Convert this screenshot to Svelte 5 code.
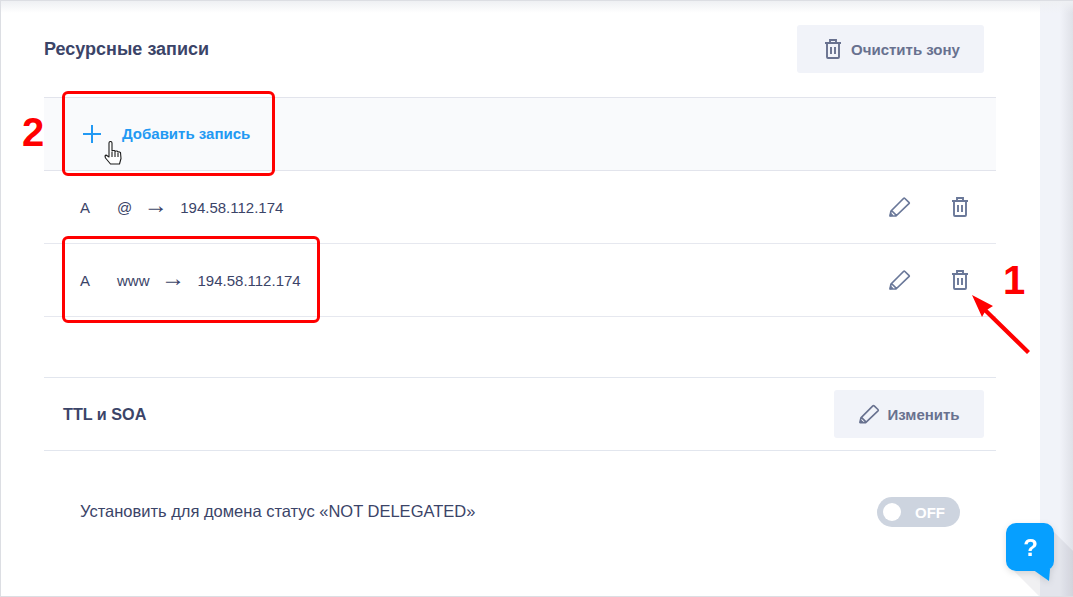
<script>
  const records = [
    { type: 'A', host: '@', ip: '194.58.112.174' },
    { type: 'A', host: 'www', ip: '194.58.112.174' }
  ];
</script>

{#snippet trash(cls)}
  <svg class={cls} viewBox="0 0 16 20" fill="none" stroke="currentColor" stroke-width="1.900">
    <path d="M0 4h16M2 4v14a1 1 0 0 0 1 1h10a1 1 0 0 0 1-1V4M5 4V1h6v3M6 8v7M10 8v7" />
  </svg>
{/snippet}

{#snippet pencil(cls)}
  <svg class={cls} viewBox="0 0 22 20" fill="none" stroke="currentColor" stroke-width="1.700" stroke-linejoin="round">
    <path d="M1 19l1-5L14.500 1.500a1 1 0 0 1 1.400 0l4 3.800a1 1 0 0 1 0 1.400L7 19zM2.500 13.500l5 5" />
    <path d="M1 19l.6-3 2.400 2.400z" fill="currentColor" stroke-width="1" />
  </svg>
{/snippet}

<div class="page">
  <main class="card">
    <header class="head">
      <h2>Ресурсные записи</h2>
      <button class="btn clear">{@render trash('btn-trash')}<span>Очистить зону</span></button>
    </header>

    <div class="add">
      <svg class="plus" viewBox="0 0 20 20" stroke="currentColor" stroke-width="2"><path d="M10 1v18M1 10h18" /></svg>
      <span class="add-label">Добавить запись</span>
    </div>

    {#each records as r}
      <div class="row">
        <span class="type">{r.type}</span>
        <span class="host">{r.host}</span>
        <span class="arrow">→</span>
        <span class="ip">{r.ip}</span>
        <span class="actions">
          {@render pencil('row-pencil')}
          {@render trash('row-trash')}
        </span>
      </div>
    {/each}

    <section class="ttl">
      <h3>TTL и SOA</h3>
      <button class="btn edit">{@render pencil('btn-pencil')}<span>Изменить</span></button>
    </section>

    <div class="status">
      <span class="status-label">Установить для домена статус «NOT DELEGATED»</span>
      <div class="toggle"><i></i><b>OFF</b></div>
    </div>
  </main>
  <div class="side"></div>

  <div class="mark mark-add"></div>
  <div class="mark mark-row"></div>
  <b class="num num2">2</b>
  <b class="num num1">1</b>
  <svg class="arrow-red" viewBox="0 0 62 62" fill="#f00">
    <path d="M2 2L23 13 17.500 16.500 60 58 57 61 14.500 19.500 12 24z" />
  </svg>
  <svg class="cursor" viewBox="0 0 18 26" stroke="#1d1d1d" stroke-width="1.100" fill="#fff" stroke-linejoin="round">
    <path d="M5 2a1.500 1.500 0 0 1 3 0v8l1-.5h1.500l.5 1 1-.5h1.200l.6 1 1-.3 1.700.8.500 6-1.500 5.500H6.500L1.500 17l-.5-2 1-1 3 2z" />
    <path d="M8 11v5M11 11v5M14 12v4" fill="none" />
  </svg>

  <div class="long-shadow"></div>
  <div class="help">
    <span class="tail"></span>
    ?
  </div>
</div>

<style>
  :global(body) { margin: 0; }
  .page {
    position: relative;
    display: flex;
    width: 1073px;
    height: 597px;
    box-sizing: border-box;
    overflow: hidden;
    font-family: "Liberation Sans", Arial, sans-serif;
    color: #3b4468;
    border-left: 1px solid #dcdee3;
    border-top: 1px solid #dcdee3;
    border-bottom: 1px solid #dcdee3;
    background: #fff;
  }
  .page::before {
    content: "";
    position: absolute;
    left: 0; right: 0; top: 0;
    height: 12px;
    background: linear-gradient(#eef0f3, rgba(255, 255, 255, 0));
    z-index: 1;
  }
  .card {
    width: 1039px;
    box-sizing: border-box;
    padding: 0 44px 0 43px;
    background: #fff;
  }
  .side {
    flex: 1;
    background: linear-gradient(90deg, #f1f3f9 60%, #dfe1e8);
  }
  .head {
    height: 96px;
    display: flex;
    align-items: flex-start;
    justify-content: space-between;
    padding: 24px 12px 0 0;
    box-sizing: border-box;
  }
  h2 { margin: 0; font-size: 18px; line-height: 48px; font-weight: 700; }
  .btn {
    display: flex;
    align-items: center;
    justify-content: center;
    height: 48px;
    border: 0;
    border-radius: 3px;
    background: #f1f3f9;
    color: #68718f;
    font: 700 15px "Liberation Sans", Arial, sans-serif;
    padding: 0;
  }
  .clear { width: 187px; gap: 10px; padding-left: 4px; }
  .edit { width: 150px; gap: 7px; padding-left: 1px; }
  .btn-trash { width: 16px; height: 20px; }
  .btn-pencil { width: 21px; height: 20px; }
  .add {
    height: 74px;
    box-sizing: border-box;
    border-top: 1px solid #e2e4ec;
    border-bottom: 1px solid #e2e4ec;
    background: #f9fafc;
    display: flex;
    align-items: center;
    padding-left: 38px;
    gap: 20px;
    color: #2299f3;
    font-size: 15px;
    font-weight: 700;
  }
  .add-label { margin-top: -2px; }
  .plus { width: 20px; height: 20px; }
  .row {
    height: 73px;
    box-sizing: border-box;
    border-bottom: 1px solid #e6e8ef;
    display: flex;
    align-items: center;
    padding-left: 36px;
    font-size: 15px;
  }
  .type { width: 37px; }
  .host { margin-right: 16px; }
  .arrow {
    width: 15px;
    margin-right: 17px;
    margin-bottom: 6px;
    font-size: 24px;
    line-height: 15px;
    display: flex;
    justify-content: center;
    font-weight: 400;
  }
  .actions {
    margin-left: auto;
    display: flex;
    align-items: center;
    color: #6a7899;
    padding-right: 28px;
    gap: 41px;
  }
  .row-pencil { width: 22px; height: 20px; }
  .row-trash { width: 16px; height: 20px; }
  .ttl {
    margin-top: 60px;
    height: 74px;
    box-sizing: border-box;
    border-top: 1px solid #e2e6ee;
    border-bottom: 1px solid #e2e6ee;
    display: flex;
    align-items: center;
    justify-content: space-between;
    padding: 0 12px 0 19px;
  }
  h3 { margin: 0; font-size: 16.200px; font-weight: 700; }
  .status {
    height: 122px;
    display: flex;
    align-items: center;
    justify-content: space-between;
    padding: 0 36px;
    font-size: 16.500px;
    box-sizing: border-box;
  }
  .status-label { margin-top: -2px; }
  .toggle {
    width: 83px;
    height: 30px;
    border-radius: 15px;
    background: #cdd4df;
    display: flex;
    align-items: center;
    box-sizing: border-box;
    padding-left: 6px;
    color: #fff;
    font-size: 15px;
  }
  .toggle i { width: 18px; height: 18px; border-radius: 50%; background: #fff; }
  .toggle b { margin-left: 14px; }

  .mark {
    position: absolute;
    border: 3px solid #f00;
    border-radius: 6px;
    box-sizing: border-box;
    z-index: 2;
  }
  .mark-add { left: 61px; top: 90px; width: 213px; height: 85px; }
  .mark-row { left: 61px; top: 235px; width: 258px; height: 87px; }
  .num {
    position: absolute;
    z-index: 2;
    color: #f00;
    font-size: 40px;
    line-height: 44px;
    font-weight: 700;
  }
  .num2 { left: 21px; top: 109px; }
  .num1 { left: 1002px; top: 257px; }
  .arrow-red { position: absolute; left: 969px; top: 292px; width: 62px; height: 62px; z-index: 2; }
  .cursor { position: absolute; left: 103px; top: 140px; width: 18px; height: 26px; z-index: 3; }
  .long-shadow {
    position: absolute;
    left: 1005px;
    top: 522px;
    width: 67px;
    height: 74px;
    background: rgba(60, 70, 90, .08);
    clip-path: polygon(48px 9px, 67px 28px, 67px 74px, 34px 74px, 8px 48px);
    z-index: 2;
  }
  .help {
    position: absolute;
    left: 1005px;
    top: 522px;
    width: 48px;
    height: 48px;
    border-radius: 10px;
    background: #069fff;
    color: #fff;
    font-size: 24px;
    font-weight: 700;
    line-height: 50px;
    text-align: center;
    z-index: 3;
    padding-left: 1px;
    box-sizing: border-box;
    filter: drop-shadow(0 2px 3px rgba(0, 0, 0, .12));
  }
  .tail {
    position: absolute;
    left: 26px;
    top: 46px;
    width: 18px;
    height: 12px;
    background: #069fff;
    clip-path: polygon(0 0, 18px 0, 17px 12px);
  }
</style>
